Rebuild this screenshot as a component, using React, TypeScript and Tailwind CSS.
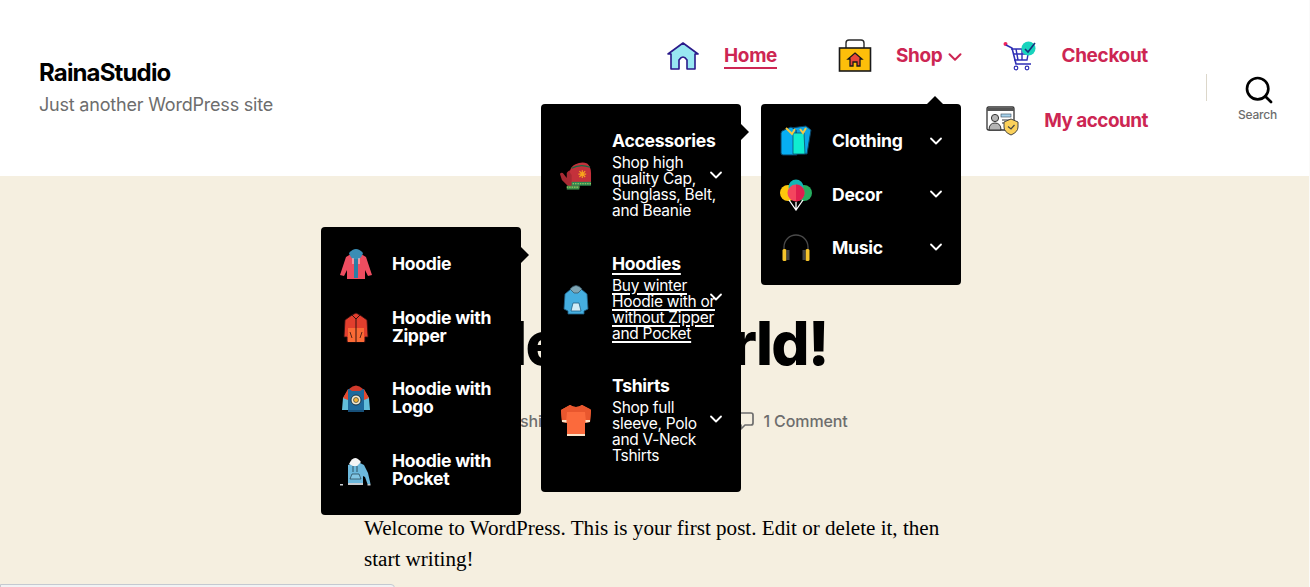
import { ChevronDown, Search } from 'lucide-react';
import type { ReactNode } from 'react';

const inter = "font-['Inter',sans-serif]";

function HomeIcon() {
  return (
    <svg width="32" height="30" viewBox="0 0 32 30">
      <path d="M16 2 L31 13 L28 13 L28 28 L20 28 L20 19 Q16 13 12 19 L12 28 L4 28 L4 13 L1 13 Z" fill="#98e8f2" stroke="#2a1a8a" strokeWidth="1.6" strokeLinejoin="round" />
    </svg>
  );
}

function ShopIcon() {
  return (
    <svg width="34" height="34" viewBox="0 0 34 34">
      <path d="M8 10 V4 Q8 1 11 1 H23 Q26 1 26 4 V10" fill="none" stroke="#2b2b2b" strokeWidth="1.4" />
      <rect x="1.5" y="9" width="31" height="23" fill="#fdbf0a" stroke="#1a1a1a" strokeWidth="1.6" />
      <path d="M17 14 L24 20 H22 V27 H19 V23 H15 V27 H12 V20 H10 Z" fill="#e8483a" stroke="#1a1a1a" strokeWidth="1.3" />
    </svg>
  );
}

function CartIcon() {
  return (
    <svg width="34" height="30" viewBox="0 0 34 30">
      <circle cx="2.5" cy="3" r="2" fill="#f0245c" />
      <path d="M3 4 L9 7 L13 23 H28" fill="none" stroke="#2f2fb5" strokeWidth="1.6" />
      <path d="M8 8 H26 L24 19 H11 M10 13 H25 M13 8 L15 19 M19 8 L19 19" fill="none" stroke="#2f2fb5" strokeWidth="1.4" />
      <circle cx="25.5" cy="7.5" r="7" fill="#18d3bd" />
      <path d="M22 8 L25 11 L32 2" fill="none" stroke="#17307e" strokeWidth="1.6" />
      <circle cx="13" cy="27" r="1.8" fill="none" stroke="#2f2fb5" strokeWidth="1.2" />
      <circle cx="24" cy="27" r="1.8" fill="none" stroke="#2f2fb5" strokeWidth="1.2" />
    </svg>
  );
}

function AccountIcon() {
  return (
    <svg width="34" height="30" viewBox="0 0 34 30">
      <rect x="1" y="1" width="27" height="23" rx="1.5" fill="#fff" stroke="#333" strokeWidth="1.3" />
      <path d="M1 2 H28 V5 H1 Z" fill="#555" />
      <rect x="15" y="8" width="10" height="3" fill="#a8d4ee" stroke="#345" strokeWidth="0.6" />
      <path d="M16 14 H25 M16 17 H22" stroke="#333" strokeWidth="1" />
      <circle cx="9" cy="12" r="3.6" fill="#b5b5b5" stroke="#333" />
      <path d="M3 24 Q3 17 9 17 Q15 17 15 24 Z" fill="#b5b5b5" stroke="#333" />
      <path d="M25 13 L32 16 V21 Q32 26 25 29 Q18 26 18 21 V16 Z" fill="#fbd15b" stroke="#444" strokeWidth="1" />
      <path d="M22 20.5 L25 23 L28.5 19" fill="none" stroke="#444" strokeWidth="1.2" />
    </svg>
  );
}

function CommentIcon() {
  return (
    <svg width="19" height="19" viewBox="0 0 19 19">
      <path d="M3 1 H16 Q18 1 18 3 V11 Q18 13 16 13 H10 L6 17 V13 H3 Q1 13 1 11 V3 Q1 1 3 1 Z" fill="none" stroke="#6d6d6d" strokeWidth="1.7" strokeLinejoin="round" />
    </svg>
  );
}

function MittensIcon() {
  return (
    <svg width="34" height="30" viewBox="0 0 34 30">
      <path d="M1 13 Q2 11 4 12 L8 17 L8 12 Q10 8 16 9 L21 14 V26 H10 L3 19 Z" fill="#a82a33" />
      <rect x="8" y="25" width="13" height="4" fill="#3f8f4a" />
      <path d="M8 26.5 H21" stroke="#b9d36a" strokeWidth="1" strokeDasharray="1.5 1" />
      <path d="M11 11 Q12 5 17 3 Q23 0 29 2 Q33 5 33 12 V22 H13 L13 14 Z" fill="#c4313b" />
      <path d="M13 7 Q22 2 32 6" fill="none" stroke="#176b45" strokeWidth="1.3" />
      <rect x="13" y="21" width="20" height="4" fill="#2e8a52" />
      <path d="M14 23 H33" stroke="#b9d36a" strokeWidth="1" strokeDasharray="1.5 1" />
      <path d="M24 9 V17 M20 13 H28 M21 10 L27 16 M27 10 L21 16" stroke="#f7a41d" strokeWidth="1.2" />
    </svg>
  );
}

function BlueHoodieIcon() {
  return (
    <svg width="26" height="32" viewBox="0 0 26 32">
      <path d="M2 11 L8 6 H18 L24 11 L25 26 L21 28 V31 H5 V28 L1 26 Z" fill="#45aee0" stroke="#1e5f86" strokeWidth="0.8" />
      <path d="M7 6 Q13 -1 19 6 L15 10 H11 Z" fill="#7fa6b5" stroke="#35586a" strokeWidth="0.8" />
      <path d="M8 28 L10 20 H16 L18 28 Z" fill="#d2ecf6" stroke="#1e5f86" strokeWidth="0.8" />
    </svg>
  );
}

function TshirtIcon() {
  return (
    <svg width="32" height="33" viewBox="0 0 32 33">
      <path d="M10 1 Q16 5 22 1 L31 6 L30 18 L25 19 V32 H7 V19 L2 18 L1 6 Z" fill="#fb6a3c" />
      <path d="M10 1 Q16 5 22 1 L30 5 L31 6 L30 18 L26 18 L25 8 L7 8 L6 18 L2 18 L1 6 Z" fill="#e9572e" />
      <path d="M7 30 H25 V32 H7 Z M2 16 H6.5 V18.5 L2 18 Z M25.5 16 H30 L30 18 L25.5 18.5 Z" fill="#fbe3c8" />
    </svg>
  );
}

function ClothingIcon() {
  return (
    <svg width="32" height="32" viewBox="0 0 32 32">
      <path d="M11 3 L26 1 L31 5 L27 29 H17 Z" fill="#0aa5e8" stroke="#0c3f5e" strokeWidth="1" />
      <path d="M2 6 L11 2 L16 5 L17 30 H3 Q1 30 1 28 V8 Z" fill="#07aef2" stroke="#0c3f5e" strokeWidth="1" />
      <path d="M13 8 L24 8 L25 29 H13 Z" fill="#10ecd0" stroke="#0c3f5e" strokeWidth="0.7" />
      <path d="M6 3 L12 9 L15 4 M20 4 L23 8 L26 3" fill="none" stroke="#f5c842" strokeWidth="2" />
    </svg>
  );
}

function BalloonsIcon() {
  return (
    <svg width="32" height="32" viewBox="0 0 32 32">
      <circle cx="8" cy="14" r="8" fill="#fdc70c" />
      <circle cx="24" cy="14" r="8" fill="#27ae60" />
      <circle cx="16" cy="8" r="7.5" fill="#12b5b5" />
      <circle cx="16" cy="14" r="8.5" fill="#f4455e" />
      <path d="M16 5.5 A8.5 8.5 0 0 1 16 22.5 Z" fill="#e01f4f" />
      <path d="M9 21 L16 31 L23 21 M16 23 V31" fill="none" stroke="#fff" strokeWidth="1.3" />
    </svg>
  );
}

function HeadphonesIcon() {
  return (
    <svg width="30" height="28" viewBox="0 0 30 28">
      <path d="M3 16 V13 A12 12 0 0 1 27 13 V16" fill="none" stroke="#4a4a4a" strokeWidth="1.3" />
      <rect x="1.5" y="15" width="4" height="12" rx="1.5" fill="#f7c52c" />
      <rect x="24.5" y="15" width="4" height="12" rx="1.5" fill="#f7c52c" />
      <rect x="5.5" y="16" width="3" height="10" fill="#444" />
      <rect x="21.5" y="16" width="3" height="10" fill="#444" />
    </svg>
  );
}

function RedHoodieIcon() {
  return (
    <svg width="32" height="32" viewBox="0 0 32 32">
      <path d="M11 6 L21 6 L26 9 L32 27 L28 28 L25 22 L25 31 H7 L7 22 L4 28 L0 27 L6 9 Z" fill="#ee4d60" />
      <path d="M14 10 H18 V30 H14 Z" fill="#2a7fa6" />
      <path d="M9 5 Q16 -3 23 5 Q21 11 18 11 H14 Q11 11 9 5 Z" fill="#3a8db5" />
      <path d="M13 10 V16 M19 10 V16" stroke="#fff" strokeWidth="0.8" />
    </svg>
  );
}

function ZipperJacketIcon() {
  return (
    <svg width="26" height="31" viewBox="0 0 26 31">
      <path d="M2 8 L9 3 L13 1 L17 3 L24 8 L25 25 H22 V30 H4 V25 H1 Z" fill="#e23e2d" stroke="#301010" strokeWidth="0.8" />
      <path d="M5 16 H21 V30 H5 Z" fill="#fb6a35" />
      <path d="M9 3 L13 7 L17 3 M13 7 V30" fill="none" stroke="#301010" strokeWidth="1" />
      <path d="M7 20 L9 26 M19 20 L17 26" stroke="#301010" strokeWidth="0.8" />
    </svg>
  );
}

function LogoHoodieIcon() {
  return (
    <svg width="28" height="29" viewBox="0 0 28 29">
      <path d="M6 5 H22 V28 H6 Z" fill="#1f6a9c" />
      <path d="M6 6 L1 14 L0 26 H6 Z M22 6 L27 14 L28 26 H22 Z" fill="#62bedb" />
      <path d="M6 5 L1 14 L6 16 Z M22 5 L27 14 L22 16 Z" fill="#e5492e" />
      <path d="M7 5 Q14 -2 21 5 L18 7 H10 Z" fill="#d03a2b" />
      <path d="M6 26 H22 V28 H6 Z" fill="#174f78" />
      <circle cx="14" cy="16" r="5" fill="#f3e9cf" stroke="#12293c" strokeWidth="0.9" />
      <circle cx="14" cy="16" r="2.5" fill="#f4b53a" stroke="#12293c" strokeWidth="0.6" />
    </svg>
  );
}

function PocketHoodieIcon() {
  return (
    <svg width="31" height="31" viewBox="0 0 31 31">
      <path d="M8 10 L14 8 H20 L24 10 L28 18 L30.5 29 H27.5 L25 22 L23 21 V28 H8 Z" fill="#6cb8dc" />
      <path d="M9 9 Q14 -2 21 7 L17 11 H13 Z" fill="#f4f4f4" />
      <path d="M10 24 L12 19 H19 L21 24 Z" fill="#82c6e4" stroke="#14252f" strokeWidth="0.6" />
      <path d="M8 28 H23 V30 H8 Z M0 29 H3 V30.5 H0 Z M27.5 29 H30.5 V30.5 H27.5 Z" fill="#c7ccd0" />
      <path d="M13 11 V17 M17 11 V17" stroke="#14252f" strokeWidth="0.7" />
    </svg>
  );
}

function NavItem({ icon, label, active, caret, labelClass }: { icon: ReactNode; label: string; active?: boolean; caret?: boolean; labelClass?: string }) {
  return (
    <a className="flex items-center text-[#cd2653] font-bold text-[18.9px] tracking-[-0.3px]">
      <span className="flex justify-center w-[34px] mr-[24px]">{icon}</span>
      <span className={`${active ? 'border-b-2 border-[#cd2653] leading-[23px]' : ''} ${labelClass ?? ''}`}>{label}</span>
      {caret && <ChevronDown size={22} strokeWidth={2.2} className="ml-[2px] mt-[2px] -mr-[4px]" />}
    </a>
  );
}

function MenuRow({ icon, title, desc, caret, caretClass, hovered, className }: { icon: ReactNode; title: string; desc?: string; caret?: boolean; caretClass?: string; hovered?: boolean; className?: string }) {
  return (
    <div className={`flex items-center pl-[18px] relative ${className ?? ''}`}>
      <span className="flex justify-center w-[33px] shrink-0 mr-[20px]">{icon}</span>
      <div className="w-[108px]">
        <div className={`font-bold text-[17.6px] tracking-[-0.3px] leading-[18px] ${hovered ? 'underline underline-offset-[3px] decoration-2' : ''}`}>{title}</div>
        {desc && <div className={`text-[15.5px] tracking-[-0.28px] leading-[16px] mt-[5px] ${hovered ? 'underline underline-offset-[2px] decoration-2' : ''}`}>{desc}</div>}
      </div>
      {caret && <ChevronDown size={20} strokeWidth={2.2} className={`absolute right-[15px] top-1/2 -translate-y-1/2 text-white ${caretClass ?? ''}`} />}
    </div>
  );
}

export default function App() {
  return (
    <div className={`relative h-[587px] overflow-hidden bg-[#f5efe0] ${inter}`}>
      <header className="bg-white h-[176px] flex items-center pl-[39px]">
        <div className="mt-[-2px]">
          <div className="font-bold text-[24px] tracking-[-0.85px] leading-[30px] text-black">RainaStudio</div>
          <div className="text-[18px] tracking-[-0.2px] leading-[24px] mt-[5px] text-[#6d6d6d]">Just another WordPress site</div>
        </div>
        <nav className="ml-auto flex flex-col items-end gap-[33px] mt-[-1px]">
          <div className="flex items-center gap-[41px]">
            <div className="mr-[20px]"><NavItem icon={<HomeIcon />} label="Home" active /></div>
            <NavItem icon={<ShopIcon />} label="Shop" caret />
            <NavItem icon={<CartIcon />} label="Checkout" />
          </div>
          <NavItem icon={<AccountIcon />} label="My account" labelClass="tracking-[-0.5px]" />
        </nav>
        <div className="flex self-start mt-[74px] ml-[58px]">
          <div className="h-[27px] border-l border-[#dcd7ca]" />
          <div className="w-[103px] flex flex-col items-center text-[#6d6d6d]">
            <Search size={32} strokeWidth={2} className="text-black" />
            <span className="text-[12px] font-medium tracking-[-0.2px] leading-[16px] mt-[1px] mr-[2px]">Search</span>
          </div>
        </div>
      </header>

      <main className="flex flex-col items-center">
        <h1 className="mt-[132px] font-extrabold text-[60px] tracking-[-1.7px] leading-[70px] text-black whitespace-nowrap">Hello World!</h1>
        <div className="flex items-center mt-[31px] ml-[25px] text-[16px] font-medium text-[#6d6d6d] tracking-[-0.1px] h-[24px]">
          <span>By ashish</span>
          <span className="ml-[17px]">November 1, 2021</span>
          <span className="ml-[24px] mr-[9px] flex"><CommentIcon /></span>
          <span>1 Comment</span>
        </div>
        <div className="mt-[80px] w-[580px] ml-[-2px] font-['Liberation_Serif',serif] text-[21.1px] leading-[31px] text-black">
          Welcome to WordPress. This is your first post. Edit or delete it, then start writing!
        </div>
      </main>

      {/* third level */}
      <div className="absolute left-[321px] top-[227px] w-[200px] h-[288px] bg-black text-white rounded-[4px] flex flex-col pt-[19px]">
        <MenuRow icon={<RedHoodieIcon />} title="Hoodie" className="h-[36px]" />
        <MenuRow icon={<ZipperJacketIcon />} title="Hoodie with Zipper" className="h-[36px] mt-[27px]" />
        <MenuRow icon={<LogoHoodieIcon />} title="Hoodie with Logo" className="h-[36px] mt-[35px]" />
        <MenuRow icon={<PocketHoodieIcon />} title="Hoodie with Pocket" className="h-[36px] mt-[36px]" />
        <div className="absolute right-[-8px] top-[20px] size-0 border-y-[8px] border-y-transparent border-l-[8px] border-l-black" />
      </div>

      {/* second level */}
      <div className="absolute left-[541px] top-[104px] w-[200px] h-[388px] bg-black text-white rounded-[4px] flex flex-col pt-[28px]">
        <MenuRow icon={<MittensIcon />} title="Accessories" desc="Shop high quality Cap, Sunglass, Belt, and Beanie" caret caretClass="mt-[-1px]" className="h-[87px]" />
        <MenuRow icon={<BlueHoodieIcon />} title="Hoodies" desc="Buy winter Hoodie with or without Zipper and Pocket" caret caretClass="mt-[-2px]" hovered className="h-[87px] mt-[36px]" />
        <MenuRow icon={<TshirtIcon />} title="Tshirts" desc="Shop full sleeve, Polo and V-Neck Tshirts" caret caretClass="mt-[-2px]" className="h-[87px] mt-[35px]" />
        <div className="absolute right-[-8px] top-[20px] size-0 border-y-[8px] border-y-transparent border-l-[8px] border-l-black" />
      </div>

      {/* first level */}
      <div className="absolute left-[761px] top-[104px] w-[200px] h-[181px] bg-black text-white rounded-[4px] flex flex-col pt-[21px]">
        <MenuRow icon={<ClothingIcon />} title="Clothing" caret className="h-[32px]" />
        <MenuRow icon={<BalloonsIcon />} title="Decor" caret caretClass="mt-[-1px]" className="h-[32px] mt-[22px]" />
        <MenuRow icon={<HeadphonesIcon />} title="Music" caret caretClass="mt-[-1px]" className="h-[32px] mt-[21px]" />
        <div className="absolute right-[18px] top-[-8px] size-0 border-x-[8px] border-x-transparent border-b-[8px] border-b-black" />
      </div>

      {/* browser link status bubble */}
      <div className="absolute left-0 top-[584px] w-[395px] h-[10px] bg-[#f1f3f4] border border-[#c4c9d0] rounded-tr-[4px]" />
      <div className="absolute right-0 top-0 bottom-0 w-px bg-[#fafafa]" />
    </div>
  );
}
